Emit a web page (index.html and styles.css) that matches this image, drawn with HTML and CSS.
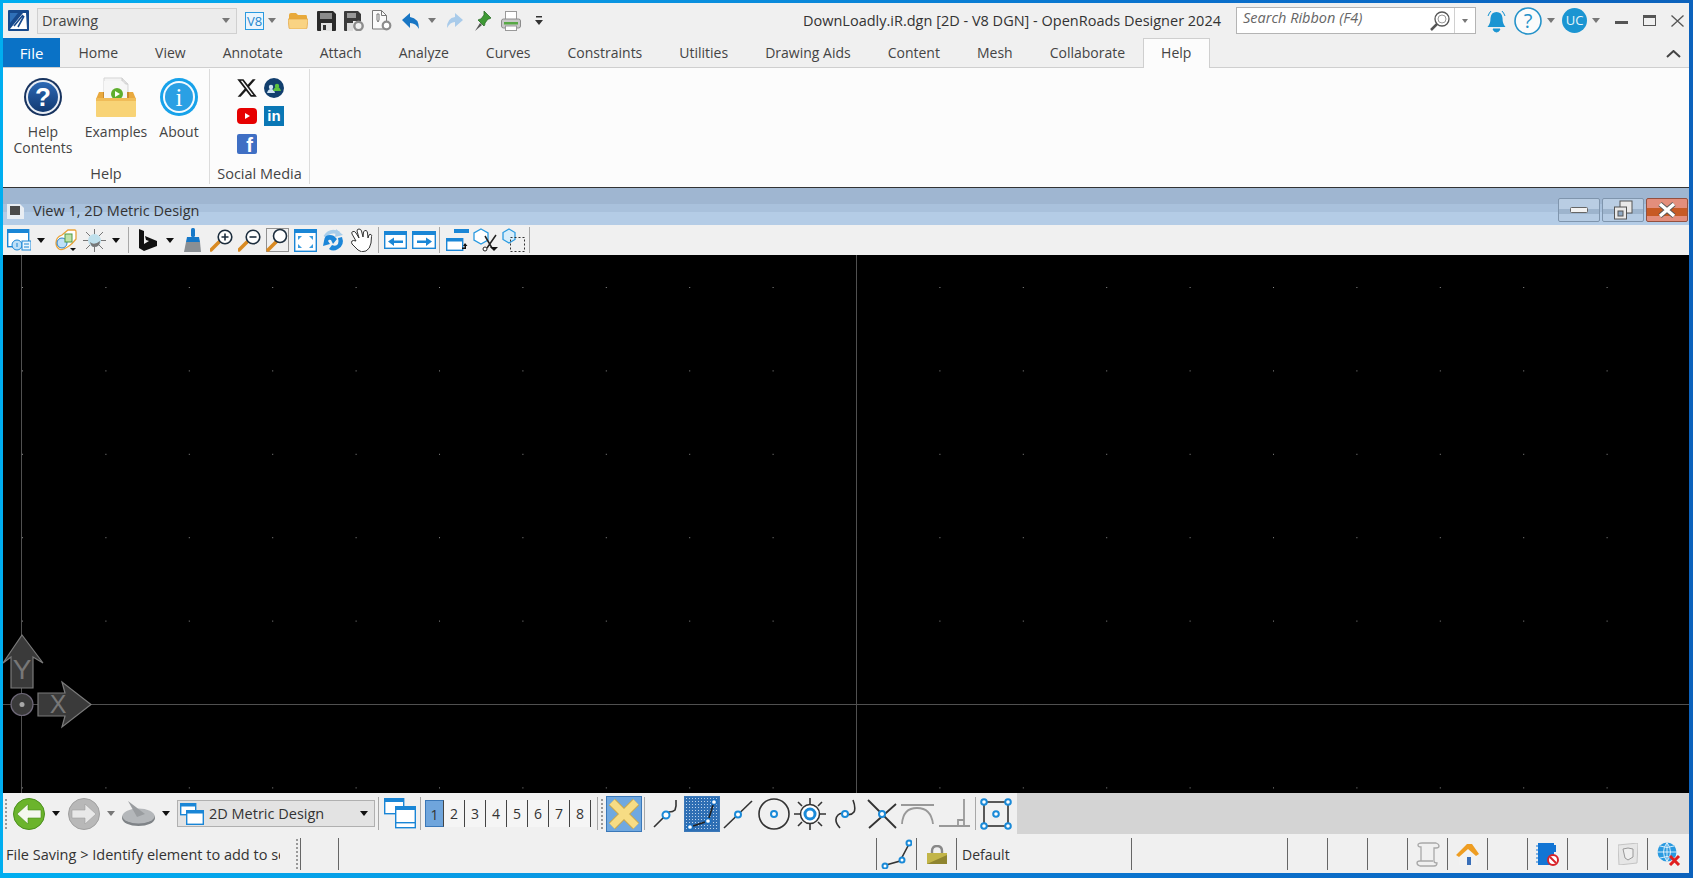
FILE: index.html
```html
<!DOCTYPE html>
<html lang="en">
<head>
    <meta charset="UTF-8">
    <title>OpenRoads Designer 2024</title>
    <link rel="stylesheet" href="styles.css">
</head>
<body>
<main class="window">
    <!-- quick access + title -->
    <header class="titlebar">
        <svg class="g5" width="21" height="21" viewBox="0 0 21 21"><rect width="21" height="21" rx="1" fill="#17498c"/><path d="M2 19 15 3h3l1 16z" fill="#fff"/><path d="M6 16 15 5M10 17l6-11" stroke="#17498c" stroke-width="1.6"/><path d="M2 3h8L2 13z" fill="#2f70b8"/></svg>
        <div class="combo g8"><span>Drawing</span><i class="caret grey"></i></div>
        <svg class="g8" width="19" height="18" viewBox="0 0 19 18"><rect x=".5" y=".5" width="18" height="17" fill="#eaf5fd" stroke="#2a9ae0"/><text x="9.5" y="14" font-size="13" text-anchor="middle" fill="#1f86cc" font-family="Open Sans">V8</text></svg>
        <i class="caret grey g4"></i>
        <svg class="g12" width="20" height="17" viewBox="0 0 20 17"><path d="M1 3q0-2 2-2h5l2 2h8q1 0 1 2v2H1z" fill="#e8a93a"/><path d="M0 7h20l-1 9q0 1-2 1H3q-2 0-2-1z" fill="#f9d383" stroke="#e3a440" stroke-width=".7"/></svg>
        <svg class="g9" width="19" height="20" viewBox="0 0 19 20"><path d="M0 1q0-1 1-1h15l3 3v16q0 1-1 1H1q-1 0-1-1z" fill="#2b2b2b"/><rect x="3" y="2" width="12" height="6" fill="#8b8b8b"/><rect x="4" y="12" width="11" height="8" fill="#e2e2e2"/><rect x="6" y="14" width="3" height="5" fill="#333"/></svg>
        <svg class="g8" width="20" height="20" viewBox="0 0 20 20"><path d="M0 1q0-1 1-1h13l3 3v7H9v10H1q-1 0-1-1z" fill="#3b3b3b"/><rect x="3" y="2" width="9" height="5" fill="#999"/><rect x="3" y="12" width="6" height="8" fill="#ddd"/><circle cx="14.500" cy="15" r="4.200" fill="none" stroke="#8c8c8c" stroke-width="2.400"/></svg>
        <svg class="g8" width="20" height="21" viewBox="0 0 20 21"><path d="M.5.5h9l5 5V19H.5z" fill="#fafafa" stroke="#777"/><path d="M9.500.5v5h5M5 4v6l1 2 1-2V4z" fill="none" stroke="#777"/><circle cx="14.500" cy="15.500" r="3.800" fill="#fff" stroke="#8c8c8c" stroke-width="2.200"/></svg>
        <svg class="g10" width="17" height="16" viewBox="0 0 17 16"><path d="M8 0v4q9 1 9 12-3-6-9-6v5L0 7z" fill="#1876c4"/></svg>
        <i class="caret grey g9"></i>
        <svg class="g11" width="16" height="15" viewBox="0 0 16 15"><path d="M8 0v4Q0 5 0 15q3-6 8-6v5l8-7z" fill="#a9cbea"/></svg>
        <svg class="g12" width="17" height="21" viewBox="0 0 17 21"><path d="M9 1l7 7-2 1-1 0-3 4q0 2-1 3L3 10q2-1 3-1l3-4V3z" fill="#3f9a35" stroke="#2b6d27" stroke-width=".8"/><path d="M5 13 0 21l7-6z" fill="#555"/></svg>
        <svg class="g9" width="20" height="20" viewBox="0 0 20 20"><rect x="4.500" y=".5" width="11" height="8" fill="#fff" stroke="#999"/><rect x=".5" y="8" width="19" height="9" rx="2" fill="#c9c9c9" stroke="#8c8c8c"/><rect x="3" y="11" width="14" height="2.500" fill="#57a845"/><rect x="4.500" y="15" width="11" height="4.500" fill="#fff" stroke="#999"/></svg>
        <svg class="g14" width="8" height="11" viewBox="0 0 8 11"><path d="M1 1h6v1.500H1zM0 5h8L4 10z" fill="#333"/></svg>

        <div class="doc-title">DownLoadly.iR.dgn [2D - V8 DGN] - OpenRoads Designer 2024</div>

        <div class="search g15">
            <span class="search-text">Search Ribbon (F4)</span>
            <svg width="20" height="20" viewBox="0 0 20 20"><circle cx="12" cy="8" r="7" fill="#fff" stroke="#555" stroke-width="1.300"/><circle cx="12" cy="8" r="4" fill="none" stroke="#999"/><path d="M7 13l-6 6" stroke="#555" stroke-width="2.500"/></svg>
            <span class="search-drop"><i class="caret grey small"></i></span>
        </div>
        <svg class="g9" width="23" height="24" viewBox="0 0 23 24"><path d="M11.500 3q5.500 0 6 6 0 6 3 9H2.500q3-3 3-9 .5-6 6-6z" fill="#1b95d2"/><path d="M8 20h7q-1 3-3.500 3T8 20zM3 7q1-3 3-5M20 7q-1-3-3-5" fill="#1b95d2" stroke="#1b95d2"/></svg>
        <svg class="g6" width="28" height="28" viewBox="0 0 28 28"><circle cx="14" cy="14" r="13" fill="#fbfbfb" stroke="#2492c9" stroke-width="1.600"/><text x="14" y="21" text-anchor="middle" font-size="20" fill="#2492c9" font-family="Open Sans">?</text></svg>
        <i class="caret grey g5"></i>
        <div class="avatar g7">UC</div>
        <i class="caret grey g5"></i>
        <svg class="g15" width="13" height="11" viewBox="0 0 13 11"><rect y="6" width="13" height="3" fill="#555"/></svg>
        <svg class="g15" width="13" height="11" viewBox="0 0 13 11"><rect x=".5" y=".5" width="12" height="10" fill="none" stroke="#555"/><rect width="13" height="3" fill="#555"/></svg>
        <svg class="g15" width="13" height="12" viewBox="0 0 13 12"><path d="M.5.500l12 11m0-11-12 11" stroke="#555" stroke-width="1.300"/></svg>
    </header>

    <!-- ribbon -->
    <nav class="tabs">
        <a class="tab file">File</a>
        <a class="tab">Home</a>
        <a class="tab">View</a>
        <a class="tab">Annotate</a>
        <a class="tab">Attach</a>
        <a class="tab">Analyze</a>
        <a class="tab">Curves</a>
        <a class="tab">Constraints</a>
        <a class="tab">Utilities</a>
        <a class="tab">Drawing Aids</a>
        <a class="tab">Content</a>
        <a class="tab">Mesh</a>
        <a class="tab">Collaborate</a>
        <a class="tab active">Help</a>
        <svg class="collapse" width="15" height="8" viewBox="0 0 15 8"><path d="M1 7l6.500-6L14 7" fill="none" stroke="#444" stroke-width="2"/></svg>
    </nav>

    <section class="ribbon">
        <div class="group help-group">
            <div class="group-items">
                <div class="rb-item help-item">
                    <svg width="40" height="40" viewBox="0 0 40 40"><defs><linearGradient id="hg" x1="0" y1="0" x2="0" y2="1"><stop offset="0" stop-color="#2c68b4"/><stop offset="1" stop-color="#123a72"/></linearGradient></defs><circle cx="20" cy="20" r="19" fill="#17335f"/><circle cx="20" cy="20" r="17" fill="#e9eef5"/><circle cx="20" cy="20" r="15" fill="url(#hg)"/><text x="20" y="29" text-anchor="middle" font-size="26" font-weight="700" fill="#fff" font-family="Liberation Sans">?</text></svg>
                    <span>Help<br>Contents</span>
                </div>
                <div class="rb-item examples-item">
                    <svg width="40" height="40" viewBox="0 0 40 40"><path d="M8 1h18l6 6v20H8z" fill="#f4f4f4" stroke="#d5d5d5"/><path d="M26 1v6h6" fill="#ddd" stroke="#ccc"/><path d="M0 22 3 15h34l3 7z" fill="#e9a93e"/><rect x="7" y="15" width="26" height="7" fill="#c98a2c"/><path d="M8 4h18l5 5v14H8z" fill="#f7f7f7"/><circle cx="21" cy="17" r="6" fill="#5fae2e"/><path d="M19 14l5 3-5 3z" fill="#fff"/><rect y="21" width="40" height="19" rx="1" fill="#f8d376"/><rect y="21" width="40" height="3" fill="#f0bc58"/></svg>
                    <span>Examples</span>
                </div>
                <div class="rb-item about-item">
                    <svg width="40" height="40" viewBox="0 0 40 40"><circle cx="20" cy="20" r="19" fill="#17a2ea"/><circle cx="20" cy="20" r="16" fill="#f6fbff"/><circle cx="20" cy="20" r="14" fill="#2aa0e4"/><text x="20" y="29" text-anchor="middle" font-size="25" fill="#fff" font-family="Liberation Serif">i</text></svg>
                    <span>About</span>
                </div>
            </div>
            <div class="group-label">Help</div>
        </div>
        <div class="group social-group">
            <div class="social">
                <svg width="20" height="20" viewBox="1 2 22 20"><path d="M18.244 2.250h3.308l-7.227 8.260 8.502 11.240H16.170l-5.214-6.817L4.990 21.750H1.680l7.730-8.835L1.254 2.250H8.080l4.713 6.231zm-1.161 17.520h1.833L7.084 4.126H5.117z" fill="#1a1a1a"/></svg>
                <svg width="20" height="20" viewBox="0 0 20 20"><circle cx="10" cy="10" r="10" fill="#123f6e"/><circle cx="7" cy="9" r="2.200" fill="#cfe3f2"/><path d="M3 15q1-4 4-4t4 4z" fill="#cfe3f2"/><circle cx="13" cy="8" r="2.200" fill="#5cc23f"/><path d="M9 13q1-4 4-4t4 4z" fill="#5cc23f"/></svg>
                <svg width="20" height="20" viewBox="0 0 20 20"><rect y="2" width="20" height="16" rx="4" fill="#e60000"/><path d="M8 7l5 3-5 3z" fill="#fff"/></svg>
                <div class="linkedin">in</div>
                <div class="facebook">f</div>
            </div>
            <div class="group-label">Social Media</div>
        </div>
    </section>

    <!-- view window -->
    <div class="view-title">
        <svg class="view-icon g4" width="17" height="16" viewBox="0 0 17 16"><path d="M0 1h13l4 4v11H0z" fill="#e8edf3"/><rect x="3" y="3" width="10" height="9" fill="#4a4a4a"/></svg>
        <span class="view-name">View 1, 2D Metric Design</span>
        <div class="win-btns">
            <button class="win-btn"><svg width="18" height="8" viewBox="0 0 18 8"><rect x=".5" y="1.500" width="17" height="5" rx="1" fill="#f2f2f2" stroke="#666"/></svg></button>
            <button class="win-btn"><svg width="22" height="22" viewBox="0 0 22 22"><rect x="8" y="2" width="12" height="12" fill="#e9e9e9" stroke="#555"/><rect x="2.500" y="8" width="12" height="12" fill="#e9e9e9" stroke="#555"/><rect x="6" y="12" width="5" height="5" fill="#8fa9c4" stroke="#555"/></svg></button>
            <button class="win-btn close"><svg width="20" height="18" viewBox="0 0 20 18"><path d="M3 3l14 12M17 3 3 15" stroke="#555" stroke-width="5"/><path d="M3 3l14 12M17 3 3 15" stroke="#fff" stroke-width="3.400"/></svg></button>
        </div>
    </div>
    <div class="view-tools">
        <svg class="g4" width="24" height="22" viewBox="0 0 24 22"><rect x=".7" y=".7" width="21" height="17" fill="#fff" stroke="#1a86d6" stroke-width="1.400"/><rect width="22" height="4" fill="#1a86d6"/><circle cx="10" cy="16" r="5" fill="#bfe0f7" stroke="#1a86d6"/><rect x="15" y="12" width="9" height="9" fill="#eaf5fd" stroke="#1a86d6"/><path d="M17 15h5M17 18h5M10 14v4" stroke="#1a86d6"/></svg>
        <i class="caret g6"></i>
        <svg class="g9" width="23" height="22" viewBox="0 0 23 22"><path d="M2 14q0-6 6-8l6-5h7q1 0 1 2v7q-4 5-7 7-7 5-10 3t-3-6z" fill="#fff" stroke="#e8a33a" stroke-width="1.300"/><circle cx="8" cy="14" r="5" fill="#bfe0f7" stroke="#2a7ec4"/><rect x="11" y="5" width="7" height="8" fill="#bfe2a8" stroke="#4e9a44"/><path d="M16 19h6l-3 3z" fill="#111"/></svg>
        <svg class="g6" width="23" height="23" viewBox="0 0 23 23"><path d="M11.500 0v23M0 11.500h23M3 3l17 17M20 3 3 20" stroke="#777"/><circle cx="11.500" cy="11.500" r="6.500" fill="#bfe0ec"/><path d="M7 13q4 4 10-1 0 6-6 6-3 0-4-5z" fill="#777"/></svg>
        <i class="caret g6"></i>
        <i class="sep g8"></i>
        <svg class="g10" width="18" height="22" viewBox="0 0 18 22"><path d="M0 0l5 2v13l5-3-3-1-1-4 12 5v5L5 22 0 19z" fill="#111"/></svg>
        <i class="caret g9"></i>
        <svg class="g10" width="17" height="24" viewBox="0 0 17 24"><rect x="7" y="0" width="4" height="9" rx="1.500" fill="#1678c8"/><path d="M3 9h12l1 5H2z" fill="#1678c8"/><path d="M2 14h14l1 10H0z" fill="#8a8f94"/></svg>
        <svg class="g9" width="23" height="23" viewBox="0 0 23 23"><path d="M1 21l8-8" stroke="#d98a22" stroke-width="3.500" stroke-linecap="round"/><circle cx="15" cy="8" r="6.800" fill="#fff" stroke="#1d2e3e" stroke-width="1.600"/><path d="M15 4.500v7M11.500 8h7" stroke="#1d2e3e" stroke-width="1.600"/></svg>
        <svg class="g5" width="24" height="23" viewBox="0 0 24 23"><path d="M1 21l8-8" stroke="#d98a22" stroke-width="3.500" stroke-linecap="round"/><circle cx="15" cy="8" r="6.800" fill="#fff" stroke="#1d2e3e" stroke-width="1.600"/><path d="M11.500 8h7" stroke="#1d2e3e" stroke-width="1.600"/></svg>
        <svg class="g4" width="23" height="24" viewBox="0 0 23 24"><rect x=".5" y=".5" width="22" height="23" fill="none" stroke="#333" stroke-dasharray="1 1"/><path d="M2 22l8-8" stroke="#d98a22" stroke-width="3.500" stroke-linecap="round"/><circle cx="14" cy="8" r="6.500" fill="#fff" stroke="#1d2e3e" stroke-width="1.600"/></svg>
        <svg class="g5" width="23" height="23" viewBox="0 0 23 23"><rect x=".7" y=".7" width="21.600" height="21.600" fill="#fff" stroke="#1a86d6" stroke-width="1.400"/><rect width="23" height="4" fill="#1a86d6"/><path d="M4 7l4 0-4 4zM19 7v4l-4-4zM4 19v-4l4 4zM19 19h-4l4-4z" fill="#3a9ce0"/></svg>
        <svg class="g5" width="23" height="23" viewBox="0 0 23 23"><path d="M3 8Q8 0 17 4" fill="none" stroke="#a8cdea" stroke-width="3.500"/><path d="M14 0l7 6-8 2z" fill="#a8cdea"/><path d="M20 8q3 8-4 12-5 3-9 0l3-4q4 2 6-1 1-3 0-6z" fill="#1c86d8"/><path d="M2 12q0-3 2-5 4-2 8 0l3 3-4 5-2-4q-2-1-3 1l2 3-7 2z" fill="#1c86d8"/></svg>
        <svg class="g5" width="23" height="24" viewBox="0 0 23 24"><path d="M6 13 2 6q-1-2 1-2.500t3 1.500l3 5L7 3q0-2 2-2t2.500 2L13 9l.5-5q1-2 2.500-1.500T17.500 5l.5 5 1-3q1-1 2-.5t.5 2L21 15q-1 6-5 8-5 2-8-1l-6-6q-1-2 0-3t4 0z" fill="#fff" stroke="#333"/></svg>
        <i class="sep g5"></i>
        <svg class="g5" width="23" height="18" viewBox="0 0 23 18"><rect x=".7" y=".7" width="21.600" height="16.600" fill="#fff" stroke="#1a86d6" stroke-width="1.400"/><rect width="23" height="4" fill="#1a86d6"/><path d="M4 10.500l6-4v3h9v2.500h-9v3z" fill="#1a86d6"/></svg>
        <svg class="g5" width="24" height="18" viewBox="0 0 24 18"><rect x=".7" y=".7" width="22.600" height="16.600" fill="#fff" stroke="#1a86d6" stroke-width="1.400"/><rect width="24" height="4" fill="#1a86d6"/><path d="M20 10.500l-6-4v3H5v2.500h9v3z" fill="#1a86d6"/></svg>
        <i class="sep g3"></i>
        <svg class="g6" width="23" height="22" viewBox="0 0 23 22"><rect x="8" width="15" height="4" fill="#1a86d6"/><rect x=".7" y="9.700" width="16" height="11.600" fill="#fff" stroke="#1a86d6" stroke-width="1.400"/><rect y="9" width="17" height="3.500" fill="#1a86d6"/><path d="M19 14l2.500 3H20v3h-4v-1.500h2.500V17H17z" fill="#111"/></svg>
        <svg class="g4" width="25" height="24" viewBox="0 0 25 24"><path d="M8 1l7 4v7l-7 4-7-4V5z" fill="#fff" stroke="#2a9ae0" stroke-width="1.300"/><path d="M12 8l7 12M23 7l-9 13" stroke="#222" stroke-width="1.500"/><circle cx="12" cy="21" r="2" fill="#fff" stroke="#222"/><path d="M17 19h8l-4 4z" fill="#111"/></svg>
        <svg class="g4" width="23" height="24" viewBox="0 0 23 24"><path d="M7 1l6 3.500v7L7 15l-6-3.500v-7z" fill="#d8eefb" stroke="#2a9ae0" stroke-width="1.300"/><rect x="8.500" y="9.500" width="14" height="14" fill="none" stroke="#333" stroke-dasharray="2 2"/></svg>
        <i class="sep g4"></i>
    </div>

    <div class="canvas">
        <svg class="drawing" width="1686" height="538" viewBox="0 0 1686 538">
            <defs>
                <pattern id="grid" width="83.400" height="83.400" patternUnits="userSpaceOnUse" patternTransform="translate(19 32)"><rect width="1" height="1" fill="#8a8a8a"/></pattern>
            </defs>
            <rect width="1686" height="538" fill="url(#grid)"/>
            <path d="M853.500 0v538M18.500 0v538M0 449.500h1686" stroke="#505050" fill="none"/>
            <g stroke="#7a7a7a" fill="#3a3a3a" stroke-width="1.200">
                <path d="M19 380 40 408 30 402V433H8V402L0 408z"/>
                <circle cx="19" cy="449.500" r="11" stroke="#6e6878"/>
                <path d="M35 438H62L59 427 88 449.500 59 472 62 461H35z"/>
            </g>
            <circle cx="19" cy="449.500" r="2.500" fill="#a8a8a8"/>
            <text class="axis-letter" x="19" y="424" text-anchor="middle" font-size="28">Y</text>
            <text class="axis-letter" x="55" y="458" text-anchor="middle" font-size="25">X</text>
        </svg>
    </div>

    <!-- bottom tools -->
    <div class="bottom">
        <div class="tools">
            <i class="grip g2"></i>
            <svg class="g6" width="32" height="32" viewBox="0 0 32 32"><circle cx="16" cy="16" r="15.500" fill="#6bb42c" stroke="#4a8f1d"/><path d="M4 16 15 6v6h13v8H15v6z" fill="#f4f8ee" stroke="#4a8f1d" stroke-width=".6"/></svg>
            <i class="caret g7"></i>
            <svg class="g8" width="32" height="32" viewBox="0 0 32 32"><circle cx="16" cy="16" r="15.500" fill="#b8b8b8" stroke="#a0a0a0"/><path d="M28 16 17 6v6H4v8h13v6z" fill="#e8e8e8" stroke="#a0a0a0" stroke-width=".6"/></svg>
            <i class="caret grey g7"></i>
            <svg class="g7" width="33" height="25" viewBox="0 0 33 25"><ellipse cx="16.500" cy="17" rx="16.500" ry="8" fill="#7f8387"/><ellipse cx="16.500" cy="15" rx="16" ry="7.500" fill="#b4b7ba"/><path d="M6 0l17 13-8 3z" fill="#9a9da0"/></svg>
            <i class="caret g7"></i>
            <div class="view-combo g7">
                <svg width="24" height="22" viewBox="0 0 24 22"><rect x=".7" y=".7" width="15" height="11" fill="#fff" stroke="#1a86d6" stroke-width="1.400"/><rect width="16" height="3.500" fill="#1a86d6"/><rect x="6.700" y="7.700" width="16.600" height="13.600" fill="#fff" stroke="#1a86d6" stroke-width="1.400"/><rect x="6" y="7" width="18" height="3.500" fill="#1a86d6"/></svg>
                <span>2D Metric Design</span>
                <i class="caret"></i>
            </div>
            <i class="sep tall g3"></i>
            <svg class="g5" width="32" height="31" viewBox="0 0 32 31"><rect x=".7" y=".7" width="19" height="15" fill="#fff" stroke="#1a86d6" stroke-width="1.400"/><rect width="20" height="4" fill="#1a86d6"/><rect x="11.700" y="8.700" width="19.600" height="21" fill="#fff" stroke="#1a86d6" stroke-width="1.400"/><rect x="11" y="8" width="21" height="4" fill="#1a86d6"/><rect x="11" y="24" width="21" height="1.400" fill="#1a86d6"/></svg>
            <i class="sep tall g4"></i>
            <div class="nums g4">
                <span class="num on">1</span><span class="num">2</span><span class="num">3</span><span class="num">4</span><span class="num">5</span><span class="num">6</span><span class="num">7</span><span class="num">8</span>
            </div>
            <i class="sep tall g6"></i>
            <i class="grip g3"></i>
            <div class="snap-on g3"><svg width="36" height="36" viewBox="0 0 36 36"><path d="M6 6 30 30M30 6 6 30" stroke="#c9a84f" stroke-width="9"/><path d="M6 6 30 30M30 6 6 30" stroke="#f7dc84" stroke-width="7"/></svg></div>
            <i class="sep tall g2"></i>
            <svg class="g8" width="27" height="28" viewBox="0 0 27 28"><path d="M1 27l9-9q4-3 6-6 4 0 6-2l1-4V0" fill="none" stroke="#333" stroke-width="1.600"/><circle cx="13" cy="15" r="3.500" fill="#fff" stroke="#1a8ad8" stroke-width="2"/></svg>
            <div class="snap-on dots g4"><svg width="36" height="36" viewBox="0 0 36 36"><path d="M6 31 24 25 30 6" fill="none" stroke="#222" stroke-width="1.600"/><circle cx="6" cy="31" r="2.600" fill="#fff" stroke="#1a6fc0" stroke-width="1.500"/><circle cx="24" cy="25" r="2.600" fill="#fff" stroke="#1a6fc0" stroke-width="1.500"/><circle cx="30" cy="6" r="2.600" fill="#fff" stroke="#1a6fc0" stroke-width="1.500"/></svg></div>
            <svg class="g3" width="30" height="30" viewBox="0 0 30 30"><path d="M1 29 29 2" stroke="#333" stroke-width="1.600"/><circle cx="15" cy="15.500" r="3" fill="#fff" stroke="#1a8ad8" stroke-width="2"/></svg>
            <svg class="g5" width="32" height="32" viewBox="0 0 32 32"><circle cx="16" cy="16" r="15" fill="none" stroke="#333" stroke-width="1.600"/><circle cx="16" cy="16" r="3" fill="#fff" stroke="#1a8ad8" stroke-width="2"/></svg>
            <svg class="g4" width="32" height="32" viewBox="0 0 32 32"><path d="M16 0v6M16 26v6M0 16h6M26 16h6M4 4l4 4M28 4l-4 4M4 28l4-4M28 28l-4-4" stroke="#333" stroke-width="1.600"/><circle cx="16" cy="16" r="9.500" fill="#fff" stroke="#333" stroke-width="1.500"/><circle cx="16" cy="16" r="5" fill="#fff" stroke="#1a8ad8" stroke-width="3"/></svg>
            <svg class="g8" width="23" height="30" viewBox="0 0 23 30"><path d="M6 29Q-1 21 4 16q3-3 7-1 6 2 9-2 2-4-1-12" fill="none" stroke="#333" stroke-width="1.600"/><circle cx="11" cy="15" r="3" fill="#fff" stroke="#1a8ad8" stroke-width="2"/></svg>
            <svg class="g10" width="30" height="30" viewBox="0 0 30 30"><path d="M1 1l28 28M29 5 2 29" stroke="#333" stroke-width="1.800"/><circle cx="15" cy="15" r="3" fill="#fff" stroke="#1a8ad8" stroke-width="2"/></svg>
            <svg class="g4" width="33" height="20" viewBox="0 0 33 20"><path d="M0 1h33M1 20Q2 4 16 4t16 16" fill="none" stroke="#999" stroke-width="1.800"/></svg>
            <svg class="g5" width="31" height="30" viewBox="0 0 31 30"><path d="M0 27h31M25 0v27M19 27v-6h6" fill="none" stroke="#999" stroke-width="1.800"/></svg>
            <i class="sep tall g5"></i>
            <svg class="g4" width="32" height="32" viewBox="0 0 32 32"><rect x="4" y="4" width="24" height="24" fill="none" stroke="#333" stroke-width="1.600"/><g fill="#fff" stroke="#1a8ad8" stroke-width="2"><circle cx="4" cy="4" r="2.800"/><circle cx="28" cy="4" r="2.800"/><circle cx="4" cy="28" r="2.800"/><circle cx="28" cy="28" r="2.800"/><circle cx="16" cy="16" r="2.800"/></g></svg>
        </div>
    </div>

    <footer class="status">
        <div class="cell msg"><span class="msg-text">File Saving &gt; Identify element to add to set</span><i class="grip"></i></div>
        <div class="cell w38"></div>
        <div class="cell fill"></div>
        <div class="cell w40"><svg width="31" height="30" viewBox="0 0 31 30"><path d="M5 26 19 22 28 5" fill="none" stroke="#333" stroke-width="1.600"/><g fill="#fff" stroke="#1a8ad8" stroke-width="2"><circle cx="4" cy="27" r="2.500"/><circle cx="21" cy="21" r="2.500"/><circle cx="28" cy="4" r="2.500"/></g></svg></div>
        <div class="cell w40"><svg width="20" height="19" viewBox="0 0 20 19"><path d="M5 9V6q0-5 5-5t5 5v3" fill="none" stroke="#888" stroke-width="2.400"/><rect y="8" width="20" height="11" fill="#c2b548"/><path d="M0 19 20 10v9z" fill="#8f8530"/></svg></div>
        <div class="cell w175 default">Default</div>
        <div class="cell w156"></div>
        <div class="cell w40"></div>
        <div class="cell w40"></div>
        <div class="cell w40"></div>
        <div class="cell w40"><svg width="24" height="25" viewBox="0 0 24 25"><path d="M6 1h14q3 1 3 3t-3 2h-2v13q0 2 3 2 0 3-3 3H4q-3-1-3-3t3-2h1V5q-3 0-3-2t4-2zM5 19h12" fill="none" stroke="#a8a8a8" stroke-width="1.300"/></svg></div>
        <div class="cell w40"><svg width="23" height="21" viewBox="0 0 23 21"><path d="M3 11 12 3l9 8v10H3z" fill="#f2f2f2"/><rect x="11" y="13" width="4" height="8" fill="#3a6fb8"/><path d="M0 11 11 0l5 0 7 10-3 2-8-7-9 8z" fill="#ee9d22"/></svg></div>
        <div class="cell w40"></div>
        <div class="cell w40"><svg width="23" height="24" viewBox="0 0 23 24"><rect x="2" y="1" width="16" height="22" fill="#1275d4"/><path d="M0 4h4M0 8h4M0 12h4M0 16h4M0 20h4" stroke="#1275d4"/><rect x="18" y="3" width="2" height="7" fill="#1275d4"/><circle cx="17" cy="18" r="5" fill="#fff" stroke="#d8232a" stroke-width="2"/><path d="M14 15l6 6" stroke="#d8232a" stroke-width="2"/></svg></div>
        <div class="cell w40"></div>
        <div class="cell w40"><svg width="20" height="22" viewBox="0 0 20 22"><path d="M0 2 20 0l-1 20L1 22z" fill="#e6e6e6" stroke="#c4c4c4"/><path d="M5 6l5-1 5 1v8l-5 3-3-2z" fill="#efefef" stroke="#999"/></svg></div>
        <div class="cell last"><svg width="24" height="24" viewBox="0 0 24 24"><circle cx="10" cy="10" r="9.500" fill="#2a9ae0"/><path d="M0 10h20M10 .5v19M3 4q7 3 14 0M3 16q7-3 14 0M10 .5q-7 9.500 0 19M10 .5q7 9.500 0 19" fill="none" stroke="#e8f5fd" stroke-width=".9"/><path d="M13 14l9 9M22 14l-9 9" stroke="#e01f1f" stroke-width="3"/></svg></div>
    </footer>
</main>
</body>
</html>
```

FILE: styles.css
```css
* {
    box-sizing: border-box;
}

body {
    margin: 0;
    font-family: "Open Sans", "Noto Sans", sans-serif;
    font-size: 14px;
    color: #444;
    overflow: hidden;
}

svg {
    display: block;
    flex: none;
}

.window {
    width: 1693px;
    height: 878px;
    padding: 3px 4px 5px 3px;
    display: flex;
    flex-direction: column;
    background: linear-gradient(90deg, #00aef0 0%, #0a96e2 35%, #0a70cc 70%, #0c62bc 100%);
}

/* spacing helpers, toolbars are packed by hand */
.g2 { margin-left: 2px; }
.g3 { margin-left: 3px; }
.g4 { margin-left: 4px; }
.g5 { margin-left: 5px; }
.g6 { margin-left: 6px; }
.g7 { margin-left: 7px; }
.g8 { margin-left: 8px; }
.g9 { margin-left: 9px; }
.g10 { margin-left: 10px; }
.g11 { margin-left: 11px; }
.g12 { margin-left: 12px; }
.g14 { margin-left: 14px; }
.g15 { margin-left: 15px; }

.caret {
    display: block;
    flex: none;
    width: 0;
    height: 0;
    box-sizing: content-box;
    border-left: 4.5px solid transparent;
    border-right: 4.5px solid transparent;
    border-top: 5px solid #111;
}

.caret.grey {
    border-top-color: #777;
}

.caret.small {
    border-left-width: 3.5px;
    border-right-width: 3.5px;
    border-top-width: 4px;
}

.sep {
    display: block;
    flex: none;
    width: 1px;
    height: 26px;
    background: #a8a8a8;
}

.sep.tall {
    height: 33px;
}

.grip {
    display: block;
    flex: none;
    width: 2px;
    height: 30px;
    background: repeating-linear-gradient(180deg, #999 0 2px, transparent 2px 4px);
}

/* title row */
.titlebar {
    height: 35px;
    flex: none;
    display: flex;
    align-items: center;
    background: #f0f0f0;
}

.combo {
    width: 200px;
    height: 26px;
    display: flex;
    align-items: center;
    justify-content: space-between;
    padding: 0 6px 0 4px;
    background: #ececec;
    border: 1px solid #d0d0d0;
    font-size: 14.500px;
}

.doc-title {
    margin-left: auto;
    font-size: 14.500px;
    color: #333;
    white-space: nowrap;
}

.search {
    width: 240px;
    height: 27px;
    display: flex;
    align-items: center;
    background: #fff;
    border: 1px solid #b4b4b4;
    padding-left: 6px;
}

.search-text {
    flex: 1;
    font-style: italic;
    color: #666;
    font-size: 14.500px;
    margin-top: -6px;
}

.search-drop {
    width: 21px;
    height: 100%;
    margin-left: 4px;
    display: flex;
    align-items: center;
    justify-content: center;
    border-left: 1px solid #d0d0d0;
}

.avatar {
    width: 25px;
    height: 25px;
    flex: none;
    border-radius: 50%;
    background: #1b95d2;
    color: #e8f5fb;
    font-size: 13px;
    line-height: 25px;
    text-align: center;
}

.titlebar > svg:last-child {
    margin-right: 5px;
}

/* ribbon */
.tabs {
    height: 30px;
    flex: none;
    display: flex;
    background: #f0f0f0;
    border-bottom: 1px solid #cfcfcf;
}

.tab {
    padding: 0 18.500px;
    height: 30px;
    line-height: 30px;
    color: #444;
    white-space: nowrap;
}

.tab.file {
    width: 57px;
    height: 29px;
    padding: 0;
    text-align: center;
    background: #0a72c6;
    color: #fff;
    font-size: 15px;
}

.tab.active {
    margin-left: -1px;
    padding: 0 17.500px;
    background: #fcfcfc;
    border: 1px solid #cfcfcf;
    border-bottom: 0;
    line-height: 28px;
}

.collapse {
    margin: 12px 8px 0 auto;
}

.ribbon {
    height: 119px;
    flex: none;
    display: flex;
    padding: 1px 0 3px;
    background: #fcfcfc;
}

.group {
    display: flex;
    flex-direction: column;
    border-right: 1px solid #dcdcdc;
}

.help-group {
    width: 207px;
}

.social-group {
    width: 100px;
}

.group-items {
    display: flex;
    padding-top: 8px;
}

.rb-item {
    display: flex;
    flex-direction: column;
    align-items: center;
    text-align: center;
    line-height: 16px;
}

.rb-item svg {
    margin-bottom: 7px;
}

.help-item {
    width: 66px;
    margin-left: 7px;
}

.examples-item {
    width: 66px;
    margin-left: 7px;
}

.about-item {
    width: 40px;
    margin-left: 10px;
}

.group-label {
    margin-top: auto;
    padding-bottom: 2px;
    line-height: 16px;
    font-size: 14.500px;
    text-align: center;
    white-space: nowrap;
}

.social {
    display: grid;
    grid-template-columns: 20px 20px;
    grid-auto-rows: 20px;
    gap: 8px 7px;
    padding: 9px 0 0 27px;
}

.linkedin {
    background: #0a77b5;
    color: #fff;
    font: 700 15px/20px "Liberation Sans", sans-serif;
    text-align: center;
}

.facebook {
    display: flex;
    align-items: flex-end;
    justify-content: flex-end;
    padding-right: 4px;
    background: #3f6fc4;
    border-radius: 2px;
    color: #fff;
    font: 700 20px/18px "Liberation Sans", sans-serif;
}

/* view window */
.view-title {
    height: 38px;
    flex: none;
    display: flex;
    align-items: center;
    border-top: 1px solid #333;
    background: linear-gradient(180deg, #9fb6d1 0, #9fb6d1 16px, #a9c1dc 16px, #a9c1dc 24px, #b4cce6 24px);
    color: #333;
}

.view-icon {
    margin-top: 8px;
}

.view-name {
    margin-left: 9px;
    font-size: 14.500px;
    margin-top: 8px;
}

.win-btns {
    margin-left: auto;
    display: flex;
    gap: 2px;
    margin-right: 1px;
    margin-top: 6px;
}

.win-btn {
    width: 42px;
    height: 24px;
    padding: 0;
    display: flex;
    align-items: center;
    justify-content: center;
    border: 1px solid #7f95ad;
    border-radius: 2px;
    background: linear-gradient(180deg, #b9cde3 0 45%, #9db4cd 45% 70%, #b5cbe3 70%);
}

.win-btn.close {
    border-color: #94503f;
    background: linear-gradient(180deg, #e38e7c 0 40%, #c75a24 40% 75%, #e38e7c 75%);
}

.view-tools {
    height: 30px;
    flex: none;
    display: flex;
    align-items: center;
    background: #f0f0f0;
}

.canvas {
    flex: 1;
    background: #000;
    overflow: hidden;
}

.axis-letter {
    fill: #777;
    font-family: "Liberation Sans", sans-serif;
}

/* bottom tool rows */
.bottom {
    height: 41px;
    flex: none;
    background: #d4d4d4;
}

.tools {
    width: 1014px;
    height: 41px;
    display: flex;
    align-items: center;
    background: #f0f0f0;
}

.view-combo {
    width: 198px;
    height: 27px;
    flex: none;
    display: flex;
    align-items: center;
    padding: 0 6px 0 2px;
    background: #e3e3e3;
    border: 1px solid #b0b0b0;
    font-size: 14.500px;
}

.view-combo span {
    flex: 1;
    margin-left: 5px;
    color: #333;
}

.nums {
    display: flex;
    height: 27px;
}

.num {
    width: 21px;
    text-align: center;
    line-height: 27px;
    color: #333;
    border-right: 1px solid #444;
    background: #f5f5f5;
}

.num.on {
    width: 19px;
    background: #6fa5dc;
    border: 1px solid #3b78b8;
    border-right-color: #444;
}

.snap-on {
    width: 36px;
    height: 36px;
    flex: none;
    background: #6fa8e0;
    border: 1px solid #3b78b8;
}

.snap-on svg {
    margin: -1px;
}

.snap-on.dots {
    background: #2f6fb4 radial-gradient(circle, #bcd4ec 0.8px, transparent 1px) 0 0 / 3px 3px;
}

.status {
    height: 39px;
    flex: none;
    display: flex;
    background: #f0f0f0;
}

.cell {
    flex: none;
    margin: 4px 0 3px;
    display: flex;
    align-items: center;
    justify-content: center;
    border-right: 1px solid #666;
    color: #333;
}

.msg {
    width: 298px;
    justify-content: flex-start;
    padding-left: 3px;
}

.msg-text {
    width: 274px;
    overflow: hidden;
    white-space: nowrap;
    font-size: 14.500px;
}

.msg .grip {
    margin-left: 16px;
}

.w38 { width: 38px; }
.w40 { width: 40px; }
.w156 { width: 156px; }
.w175 { width: 175px; }

.fill {
    width: 538px;
}

.default {
    justify-content: flex-start;
    padding-left: 5px;
}

.last {
    width: 42px;
    border-right: 0;
}
```
